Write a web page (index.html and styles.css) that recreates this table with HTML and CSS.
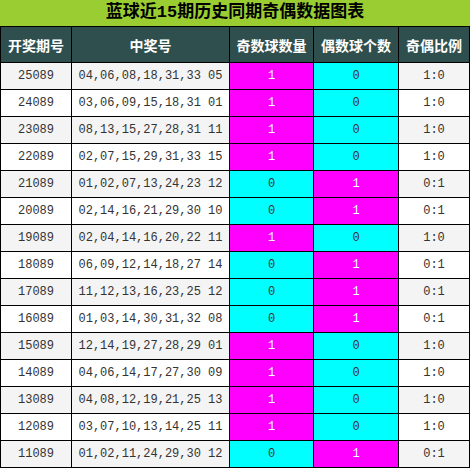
FILE: index.html
```html
<!DOCTYPE html>
<html lang="zh">
<head>
<meta charset="utf-8">
<link rel="stylesheet" href="styles.css">
</head>
<body>
<div class="chart">
  <div class="title">蓝球近15期历史同期奇偶数据图表</div>
  <div class="grid">
    <div class="row head"><div>开奖期号</div><div>中奖号</div><div>奇数球数量</div><div>偶数球个数</div><div>奇偶比例</div></div>
    <div class="row"><div>25089</div><div>04,06,08,18,31,33 05</div><div class="m">1</div><div class="c">0</div><div>1:0</div></div>
    <div class="row"><div>24089</div><div>03,06,09,15,18,31 01</div><div class="m">1</div><div class="c">0</div><div>1:0</div></div>
    <div class="row"><div>23089</div><div>08,13,15,27,28,31 11</div><div class="m">1</div><div class="c">0</div><div>1:0</div></div>
    <div class="row"><div>22089</div><div>02,07,15,29,31,33 15</div><div class="m">1</div><div class="c">0</div><div>1:0</div></div>
    <div class="row"><div>21089</div><div>01,02,07,13,24,23 12</div><div class="c">0</div><div class="m">1</div><div>0:1</div></div>
    <div class="row"><div>20089</div><div>02,14,16,21,29,30 10</div><div class="c">0</div><div class="m">1</div><div>0:1</div></div>
    <div class="row"><div>19089</div><div>02,04,14,16,20,22 11</div><div class="m">1</div><div class="c">0</div><div>1:0</div></div>
    <div class="row"><div>18089</div><div>06,09,12,14,18,27 14</div><div class="c">0</div><div class="m">1</div><div>0:1</div></div>
    <div class="row"><div>17089</div><div>11,12,13,16,23,25 12</div><div class="c">0</div><div class="m">1</div><div>0:1</div></div>
    <div class="row"><div>16089</div><div>01,03,14,30,31,32 08</div><div class="c">0</div><div class="m">1</div><div>0:1</div></div>
    <div class="row"><div>15089</div><div>12,14,19,27,28,29 01</div><div class="m">1</div><div class="c">0</div><div>1:0</div></div>
    <div class="row"><div>14089</div><div>04,06,14,17,27,30 09</div><div class="m">1</div><div class="c">0</div><div>1:0</div></div>
    <div class="row"><div>13089</div><div>04,08,12,19,21,25 13</div><div class="m">1</div><div class="c">0</div><div>1:0</div></div>
    <div class="row"><div>12089</div><div>03,07,10,13,14,25 11</div><div class="m">1</div><div class="c">0</div><div>1:0</div></div>
    <div class="row"><div>11089</div><div>01,02,11,24,29,30 12</div><div class="c">0</div><div class="m">1</div><div>0:1</div></div>
  </div>
</div>
</body>
</html>
```

FILE: styles.css
```css
html, body {
  margin: 0;
  padding: 0;
  background: #fff;
}
.chart {
  width: 470px;
  font-family: "Liberation Mono", "Noto Sans CJK SC", monospace;
}
.title {
  height: 26px;
  line-height: 26px;
  background: #9acd32;
  color: #000;
  font-size: 17px;
  font-weight: bold;
  text-align: center;
}
.grid {
  display: flex;
  flex-direction: column;
  gap: 1px;
  padding: 1px;
  background: #000;
}
.row {
  display: grid;
  grid-template-columns: 70px 157px 83px 84px 70px;
  gap: 1px;
  height: 26px;
}
.row > div {
  display: flex;
  align-items: center;
  justify-content: center;
  font-size: 12px;
  color: #333;
  background: #fff;
}
.row:nth-child(even) > div {
  background: #f4f4f4;
}
.row.head {
  height: 35px;
}
.row.head > div {
  background: #2f4f4f;
  color: #fff;
  font-size: 14px;
  font-weight: bold;
  font-family: "Noto Sans CJK SC", sans-serif;
}
.row > div.m {
  background: #ff00ff;
  color: #fff;
}
.row > div.c {
  background: #00ffff;
  color: #333;
}
```
